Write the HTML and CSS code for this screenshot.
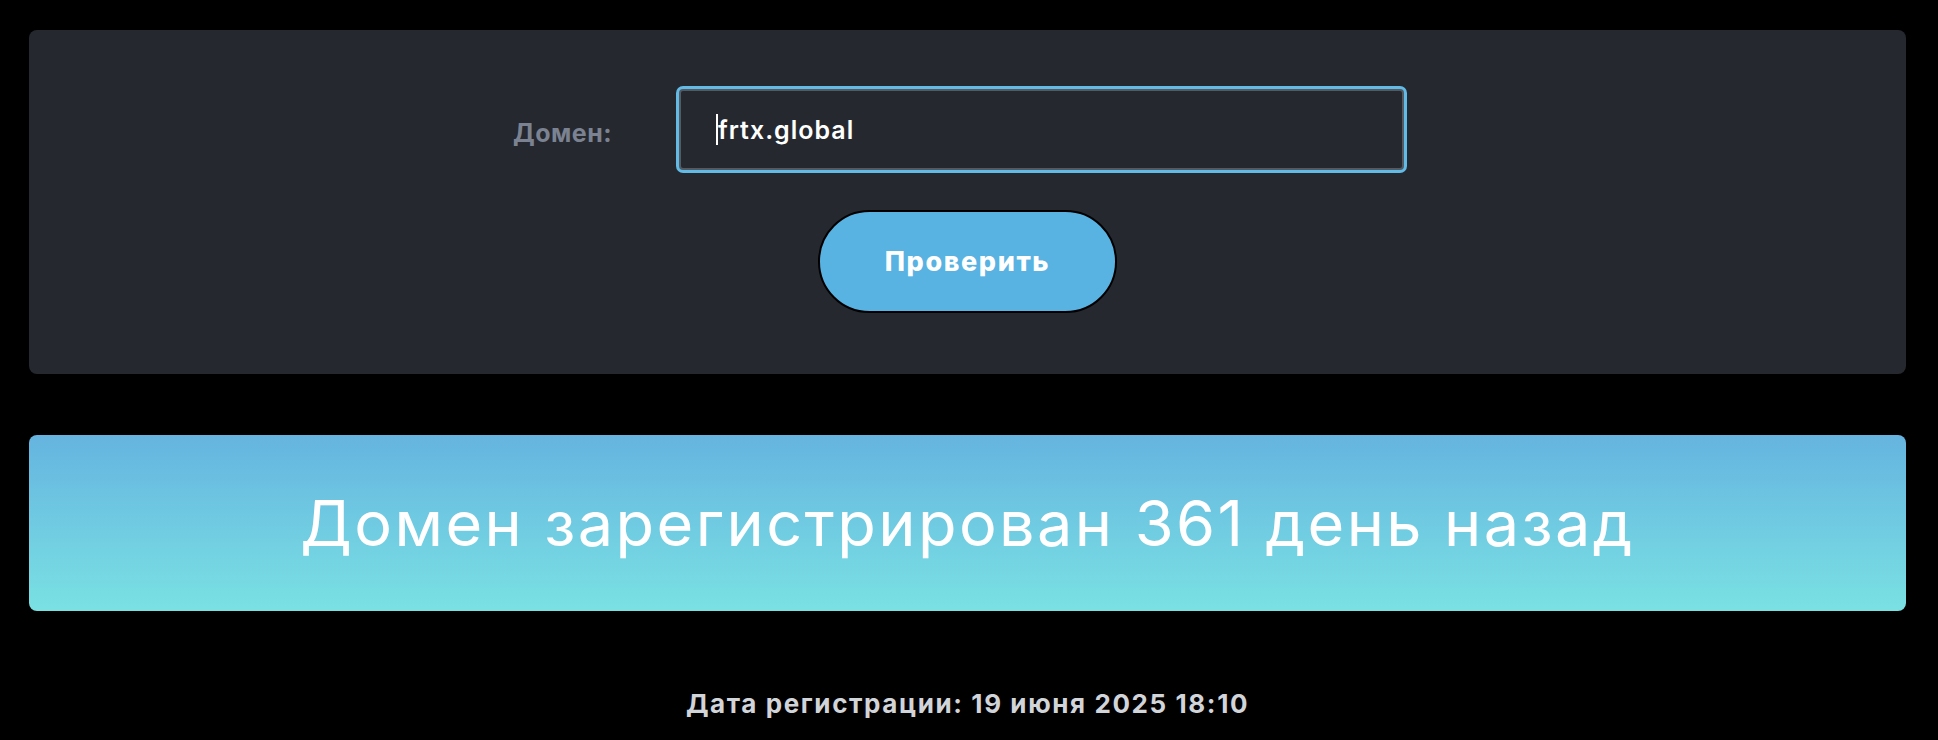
FILE: index.html
```html
<!DOCTYPE html>
<html lang="ru">
<head>
  <meta charset="UTF-8">
  <meta name="viewport" content="width=device-width, initial-scale=1.0">
  <title>Проверка домена</title>
  <link rel="stylesheet" href="styles.css">
</head>
<body>
  <div class="page">
    <form class="check-card">
      <div class="field-row">
        <label class="field-label" for="domain">Домен:</label>
        <div class="field-wrap">
          <input class="field-input" type="text" id="domain" value="frtx.global">
          <span class="caret"></span>
        </div>
      </div>
      <button class="check-btn" type="button">Проверить</button>
    </form>

    <div class="result-banner">
      <h1>Домен зарегистрирован 361 день назад</h1>
    </div>

    <p class="reg-date">Дата регистрации: 19 июня 2025 18:10</p>
  </div>
</body>
</html>
```

FILE: styles.css
```css
*{
  box-sizing: border-box;
}
body{
  margin: 0;
  background: #000;
  font-family: Inter, "Noto Sans", sans-serif;
  color: #fff;
}
.page{
  padding: 30px 32px 0 29px;
}
.check-card{
  background: #25282e;
  border-radius: 8px;
  height: 344px;
  padding-top: 56px;
  display: flex;
  flex-direction: column;
  align-items: center;
}
.field-row{
  display: flex;
  align-items: center;
  padding-right: 15px;
}
.field-label{
  width: 98px;
  margin-right: 65px;
  padding-top: 6px;
  color: #7b8291;
  font-size: 25px;
  font-weight: 700;
  letter-spacing: 0.5px;
  white-space: nowrap;
}
.field-wrap{
  position: relative;
}
.field-input{
  display: block;
  width: 725px;
  height: 81px;
  margin: 3px;
  padding: 0 0 0 37px;
  background: #25282e;
  border: 2px solid #535a62;
  border-radius: 4px;
  box-shadow: 0 0 0 3px #62bbe6;
  outline: none;
  color: #fff;
  font-family: inherit;
  font-size: 25px;
  font-weight: 600;
  letter-spacing: 1px;
}
.caret{
  position: absolute;
  left: 40px;
  top: 28px;
  width: 1.5px;
  height: 31px;
  background: #fff;
}
.check-btn{
  margin-top: 37px;
  width: 299px;
  height: 103px;
  border: 2px solid #000;
  border-radius: 52px;
  background: #58b2e2;
  color: #fff;
  font-family: inherit;
  font-size: 27px;
  font-weight: 800;
  letter-spacing: 1.6px;
  cursor: pointer;
}
.result-banner{
  margin-top: 61px;
  height: 176px;
  border-radius: 8px;
  background: linear-gradient(to bottom, #65b4e0, #7ae1e3);
  display: flex;
  align-items: center;
  justify-content: center;
}
.result-banner h1{
  margin: 0;
  font-size: 63px;
  font-weight: 400;
  letter-spacing: 2.4px;
  color: #fff;
}
.reg-date{
  margin: 77px 0 0;
  text-align: center;
  color: #d1d4d9;
  font-size: 26px;
  font-weight: 700;
  letter-spacing: 1.6px;
}
```
